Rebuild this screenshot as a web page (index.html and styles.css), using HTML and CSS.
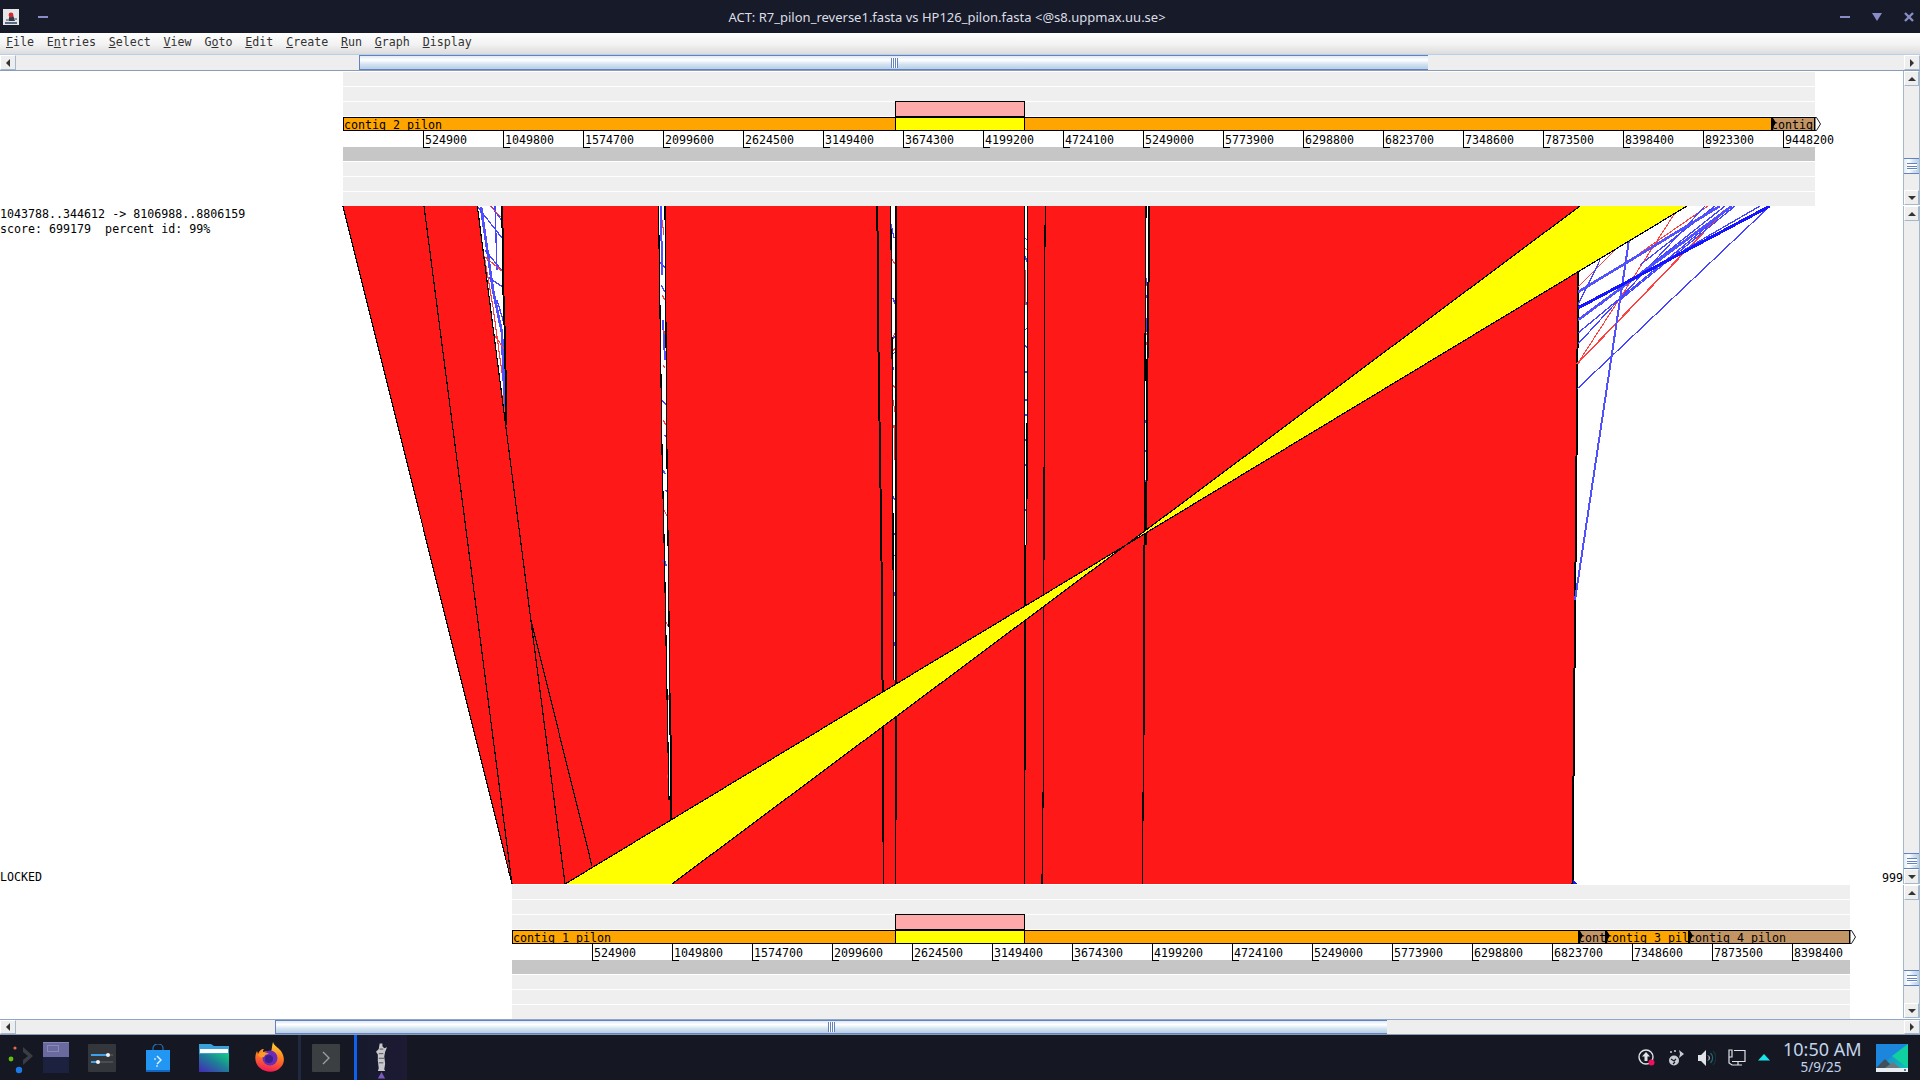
FILE: index.html
```html
<!DOCTYPE html>
<html lang="en">
<head>
<meta charset="utf-8">
<title>ACT</title>
<link rel="stylesheet" href="styles.css">
</head>
<body>
<div class="window">
  <header class="titlebar">
    <div class="title-left">
      <svg class="java-icon" viewBox="0 0 16 16"><rect width="16" height="16" fill="#e4e6ea"/><path d="M2 13h12v2H2z" fill="#5a6a80"/><path d="M5 12l2-6h3l2 6z" fill="#333a48"/><circle cx="8" cy="6" r="2.4" fill="#d8262a"/><path d="M3 10h3v2H3zM11 9h3v2h-3z" fill="#8c96a6"/></svg>
      <span class="wm-dash wm-dash-left"></span>
    </div>
    <div class="title-text">ACT: R7_pilon_reverse1.fasta vs HP126_pilon.fasta &lt;@s8.uppmax.uu.se&gt;</div>
    <div class="title-right">
      <span class="wm-dash"></span>
      <svg class="wm-down" viewBox="0 0 10 8"><path d="M0 0h10L5 8z"/></svg>
      <svg class="wm-close" viewBox="0 0 10 10"><path d="M1 1l8 8M9 1L1 9"/></svg>
    </div>
  </header>

  <nav class="menubar">
    <span><u>F</u>ile</span><span>E<u>n</u>tries</span><span><u>S</u>elect</span><span><u>V</u>iew</span><span>G<u>o</u>to</span><span><u>E</u>dit</span><span><u>C</u>reate</span><span><u>R</u>un</span><span><u>G</u>raph</span><span><u>D</u>isplay</span>
  </nav>

  <div class="hbar hbar-top">
    <span class="btn btn-h"><i class="tri tri-l"></i></span>
    <span class="h-before"></span>
    <span class="thumb-h"><i class="grip-h"></i></span>
    <span class="h-after"></span>
    <span class="btn btn-h"><i class="tri tri-r"></i></span>
  </div>

  <section class="panel panel-top">
    <div class="feature">
      <div class="track track-a">
        <div class="strip"></div><div class="strip"></div><div class="strip"></div>
        <div class="seqbar">
          <div class="seg orange w-a1">contig 2 pilon</div>
          <div class="seg tan marked w-a2">contig</div>
          <svg class="endarrow" viewBox="0 0 6 14"><path d="M0 0.5h1.5L5.5 7l-4 6.5H0z"/></svg>
        </div>
        <div class="ticks">
          <span class="tick">524900</span><span class="tick">1049800</span><span class="tick">1574700</span><span class="tick">2099600</span><span class="tick">2624500</span><span class="tick">3149400</span><span class="tick">3674300</span><span class="tick">4199200</span><span class="tick">4724100</span><span class="tick">5249000</span><span class="tick">5773900</span><span class="tick">6298800</span><span class="tick">6823700</span><span class="tick">7348600</span><span class="tick">7873500</span><span class="tick">8398400</span><span class="tick">8923300</span><span class="tick">9448200</span>
        </div>
        <div class="strip grey"></div><div class="strip"></div><div class="strip"></div><div class="strip last"></div>
        <div class="sel sel-pink sel-a"></div>
        <div class="sel sel-yellow sel-a"></div>
      </div>
    </div>
    <div class="vbar">
      <span class="btn btn-v"><i class="tri tri-u"></i></span>
      <span class="v-before vb-a"></span>
      <span class="thumb-v"><i class="grip-v"></i></span>
      <span class="v-after"></span>
      <span class="btn btn-v"><i class="tri tri-d"></i></span>
    </div>
  </section>

  <section class="panel panel-mid">
    <div class="canvas">
      <svg class="ribbons" width="1903" height="678" viewBox="0 206 1903 678">
        <polygon class="red" points="343,206 1580,206 1578.5,272 1572.5,884 512,884"/>

        <polygon class="white" points="477.3,206 502.3,206 503,280 505,340 506,425 505,423 493.3,333 483.3,250"/>
        <polygon class="white" points="658.5,206 665,206 667,460 668.3,560 671,800 669,800 664.5,560 662,450"/>
        <polygon class="white" points="890.7,206 895.7,206 895.7,680 893.5,680 892.5,400"/>
        <polygon class="white" points="1025,206 1027.5,206 1026.5,545 1025,545"/>
        <polygon class="white" points="1146.5,206 1149.5,206 1146,545 1144.5,545"/>

        <g class="fine">
          <path class="bm" d="M481,207L493,290L502,333L505,413"/>
          <path class="bl" d="M477,206L502,238M495,206L497,270M485,250L503,272M488,277L504,288M491,206L503,222M497,300L506,330"/>
          <path class="rl" d="M485,260L493,307L502,373M490,206L502,218M484,256L503,272M495,336L505,350M503,395L505,420"/>
          <path class="bs" d="M661,206L662,275M663,320L665,360M663,470L665,474M664,560L666,566"/>
          <path class="bl" d="M660,262L665,268M661,285L665,292M662,400L666,405M664,435L667,437M665,490L668,492"/>
          <path class="rl" d="M662,220L664,235M662,295L665,300M663,330L666,336M663,365L665,368M663,420L666,425M664,510L667,516M665,620L668,626M667,690L669,700M667,775L669,780"/>
          <path class="bl" d="M891,224L894,238M893,298L895,304M892,340L895,336M892,355L895,352M892,365L894,370M892,495L895,500M892,530L895,535M893,555L895,556M893,590L895,596M893,640L895,646"/>
          <path class="rl" d="M891,258L895,264M893,337L895,333M892,352L895,348M893,385L895,388M893,400L895,412M894,425L895,460"/>
          <path class="bl" d="M1025,238L1027,240M1025,256L1027,262M1025,300L1027,304M1025,330L1027,328M1025,345L1027,348M1025,372L1027,372M1025,400L1027,400M1025,415L1027,415M1025,440L1027,440M1025,465L1027,465M1025,510L1027,510"/>
          <path class="rl" d="M1025,270L1026,305M1025,248L1027,250"/>
          <path class="bl" d="M1146,278L1147,285M1146,295L1148,300M1146,318L1146,332M1145,375L1147,378M1146,400L1148,402M1145,420L1147,425M1145,450L1146,452M1145,480L1146,485M1145,510L1146,515"/>
          <path class="rl" d="M1147,285L1148,300M1146,335L1148,332M1146,345L1148,340M1146,375L1148,372"/>
        </g>

        <path class="bk" d="M343,206L512,884"/>
        <path class="bk" d="M424,206L512,884"/>
        <path class="bk" d="M477.3,206L565,884"/>
        <path class="bk" d="M531,620L592,866"/>
        <path class="bk2" d="M502.3,206L503,280L505,340L506.5,425"/>
        <path class="bk" d="M658.5,206L662,450L664.5,560L669,800"/>
        <path class="bk" d="M665,206L667,460L668.3,560L670,700"/>
        <path class="bk2" d="M670.3,700L671,820"/>
        <path class="bk2" d="M877,206L878,255L878.5,352L880,455L881,520L882,600L882.5,680L883,830"/>
        <path class="bk" d="M883,830L883.5,884"/>
        <path class="bk" d="M890.7,206L892.5,400L893.5,680"/>
        <path class="bk2" d="M895.5,206L895.5,820"/>
        <path class="bk" d="M895.5,820L895.5,884"/>
        <path class="bk" d="M1024.6,206L1024.6,545"/>
        <path class="bk2" d="M1025,545L1025,770"/>
        <path class="bk" d="M1027.7,206L1026.8,545"/>
        <path class="bk" d="M1024.8,770L1024.4,884"/>
        <path class="bk" d="M1045.3,206L1044.5,290L1043.5,760L1042,884"/>
        <path class="bk" d="M1146,206L1145,350L1144.5,545"/>
        <path class="bk2" d="M1149.5,206L1147.5,360L1146,545"/>
        <path class="bk2" d="M1144.5,545L1144,735"/>
        <path class="bk" d="M1143.5,735L1142.5,884"/>
        <path class="bk2" d="M1578.5,272L1577.5,350L1572.5,884"/>

        <g class="fine">
          <path class="rl" d="M1578,287L1615,250M1640,253L1708,206M1578,363L1675,213"/>
          <path class="rm" d="M1577,364L1725,210"/>
          <path class="bl" d="M1578,305L1600,260M1578,333L1727,210M1578,344L1705,206M1577,389L1770,206M1684,250L1760,206M1620,300L1735,206M1640,265L1715,206M1600,305L1725,206"/>
          <path class="bm" d="M1578,292L1720,206"/>
          <path class="bm" d="M1578,320L1732,206"/>
          <path class="bs" d="M1629,240L1575,600"/>
          <path class="bt" d="M1578,308L1770,206"/>
          <path class="bdark" d="M1573,880L1577,884L1573,884z"/>
        </g>

        <polygon class="yellow" points="1580,206 672,884 565,884 1687,206"/>
        <path class="bk" d="M1580,206L672,884"/>
        <path class="bk" d="M1687,206L565,884"/>
      </svg>
      <div class="info">1043788..344612 -&gt; 8106988..8806159<br>score: 699179  percent id: 99%</div>
      <div class="locked">LOCKED</div>
      <div class="cutoff">999</div>
    </div>
    <div class="vbar">
      <span class="btn btn-v"><i class="tri tri-u"></i></span>
      <span class="v-before vb-b"></span>
      <span class="thumb-v"><i class="grip-v"></i></span>
      <span class="btn btn-v"><i class="tri tri-d"></i></span>
    </div>
  </section>

  <section class="panel panel-bot">
    <div class="feature">
      <div class="track track-b">
        <div class="strip"></div><div class="strip"></div><div class="strip"></div>
        <div class="seqbar">
          <div class="seg orange w-b1">contig 1 pilon</div>
          <div class="seg tan marked w-b2">contig 2 pilon</div>
          <div class="seg orange marked w-b3">contig 3 pilon</div>
          <div class="seg tan marked w-b4">contig 4 pilon</div>
          <svg class="endarrow" viewBox="0 0 6 14"><path d="M0 0.5h1.5L5.5 7l-4 6.5H0z"/></svg>
        </div>
        <div class="ticks">
          <span class="tick">524900</span><span class="tick">1049800</span><span class="tick">1574700</span><span class="tick">2099600</span><span class="tick">2624500</span><span class="tick">3149400</span><span class="tick">3674300</span><span class="tick">4199200</span><span class="tick">4724100</span><span class="tick">5249000</span><span class="tick">5773900</span><span class="tick">6298800</span><span class="tick">6823700</span><span class="tick">7348600</span><span class="tick">7873500</span><span class="tick">8398400</span>
        </div>
        <div class="strip grey"></div><div class="strip"></div><div class="strip"></div><div class="strip last"></div>
        <div class="sel sel-pink sel-b"></div>
        <div class="sel sel-yellow sel-b"></div>
      </div>
    </div>
    <div class="vbar">
      <span class="btn btn-v"><i class="tri tri-u"></i></span>
      <span class="v-before vb-c"></span>
      <span class="thumb-v"><i class="grip-v"></i></span>
      <span class="v-after"></span>
      <span class="btn btn-v"><i class="tri tri-d"></i></span>
    </div>
  </section>

  <div class="hbar hbar-bot">
    <span class="btn btn-h"><i class="tri tri-l"></i></span>
    <span class="h-before"></span>
    <span class="thumb-h"><i class="grip-h"></i></span>
    <span class="h-after"></span>
    <span class="btn btn-h"><i class="tri tri-r"></i></span>
  </div>

  <footer class="taskbar">
    <svg class="tb launcher" viewBox="0 0 28 36"><circle cx="7" cy="4" r="1.6" fill="#e8694a"/><circle cx="3" cy="15" r="2.4" fill="#5fc10a"/><circle cx="11" cy="26" r="3.2" fill="#1a7be8"/><path d="M15 3l10 9-10 9-0-5 5-4-5-4z" fill="#3a3d42"/></svg>
    <div class="tb pager"><div class="pager-on"><i></i></div><div class="pager-off"></div></div>
    <svg class="tb settings" viewBox="0 0 28 28"><rect width="28" height="28" rx="1" fill="#33373b"/><path d="M3 10h22v2H3zM3 17h22v2H3z" fill="#4a4e53"/><path d="M3 10h17v2H3zM3 17h7v2H3z" fill="#3da0e8"/><circle cx="20" cy="11" r="2" fill="#f2f2f2"/><circle cx="10" cy="18" r="2" fill="#f2f2f2"/></svg>
    <svg class="tb bag" viewBox="0 0 24 28"><path d="M7 7V4a5 4 0 0 1 10 0v3" fill="none" stroke="#2a6fb0" stroke-width="1.2"/><path d="M0 6h24v22H0z" fill="#2196f3"/><path d="M0 26h24v2H0z" fill="#1565c0"/><path d="M11 12l4 4-4 4" fill="none" stroke="#e8f4ff" stroke-width="1.4"/><circle cx="9" cy="15" r="1" fill="#bde0ff"/><circle cx="11" cy="22" r="1" fill="#bde0ff"/></svg>
    <svg class="tb folder" viewBox="0 0 30 28"><defs><linearGradient id="fg" x1="0" y1="1" x2="1" y2="0"><stop offset="0" stop-color="#4527b8"/><stop offset="0.55" stop-color="#1f7f98"/><stop offset="1" stop-color="#10d080"/></linearGradient></defs><path d="M0 0h12l3 2h15v26H0z" fill="#3aa0d8"/><path d="M1 5h28v4H1z" fill="#fff"/><path d="M0 10h30v18H0z" fill="url(#fg)"/></svg>
    <svg class="tb firefox" viewBox="0 0 30 30"><defs><linearGradient id="ff" x1="0.6" y1="0" x2="0.4" y2="1"><stop offset="0" stop-color="#ffd23a"/><stop offset="0.5" stop-color="#ff7a1f"/><stop offset="1" stop-color="#f0185a"/></linearGradient></defs><path d="M18 0c1 4 5 5 8 9 4 6 4 13-1 17-5 5-14 5-20 0C0 22-1 15 2 9l1 3c1-3 3-5 6-5-1 1-1 2-1 3 3-1 6-1 8 0 1-3 1-7 2-10z" fill="url(#ff)"/><circle cx="15" cy="16" r="7.5" fill="#6a2bb8"/><circle cx="14" cy="17" r="4" fill="#3c1f8c"/><path d="M3 13c3-4 8-3 11-1-3 0-4 1-5 3-3 1-5 0-6-2z" fill="#ff9a2a"/></svg>
    <span class="tb-sep"></span>
    <svg class="tb term" viewBox="0 0 28 28"><rect width="28" height="28" rx="1" fill="#3c3f41"/><path d="M11 8l6 6-6 6" fill="none" stroke="#9a9da0" stroke-width="1.4"/></svg>
    <div class="active-task">
      <svg class="statue" viewBox="0 0 12 38"><path d="M4 0h3v3l2 2 3-1-2 5-1 5 1 8-1 6 1 2H2l1-3-1-8 0-7-2-3 3-3z" fill="#c8c8cc"/><path d="M4 6h4M3 11h5M3 16h6M3 21h5" stroke="#4a4a50" stroke-width="1"/><path d="M6 31l4 7H2z" fill="#7a5ab8"/></svg>
    </div>
    <div class="tray">
      <svg class="ti upd" viewBox="0 0 18 18"><circle cx="8" cy="8" r="7" fill="none" stroke="#dfe2e6" stroke-width="1.4"/><path d="M8 3l4 4.5H9.5V12h-3V7.5H4z" fill="#dfe2e6"/><circle cx="13.5" cy="13.5" r="3" fill="#f0105f"/></svg>
      <svg class="ti net" viewBox="0 0 18 18"><circle cx="6" cy="11.5" r="5" fill="#c8ccd2"/><path d="M3 10l3 2 2-2M5 15l2-2" stroke="#151823" stroke-width="1.2" fill="none"/><circle cx="3" cy="3" r="1" fill="#c8ccd2"/><circle cx="7" cy="2" r="1" fill="#c8ccd2"/><path d="M11 1l5 4-5 4 1-4z" fill="#c8ccd2"/></svg>
      <svg class="ti vol" viewBox="0 0 18 18"><path d="M0 6h3l5-5v16l-5-5H0z" fill="#dfe2e6"/><path d="M10 6.5a3 3 0 0 1 0 5" stroke="#dfe2e6" fill="none"/><path d="M12.5 4a7 7 0 0 1 0 10" stroke="#1f6a70" fill="none" stroke-width="1.2"/><path d="M15 2a10 10 0 0 1 0 14" stroke="#16343c" fill="none" stroke-width="1.2"/></svg>
      <svg class="ti mon" viewBox="0 0 18 18"><path d="M6 1.500h11v11H4M1 1h3v7H1zM1 8v6l3 2h10M10 13v3" fill="none" stroke="#dfe2e6" stroke-width="1.200"/></svg>
      <svg class="ti caret" viewBox="0 0 12 7"><path d="M6 0l6 6.500H0z" fill="#19e4ea"/></svg>
      <div class="clock"><div class="time">10:50 AM</div><div class="date">5/9/25</div></div>
      <svg class="desk" viewBox="0 0 32 28"><defs><linearGradient id="dg" x1="0" y1="0" x2="1" y2="1"><stop offset="0" stop-color="#1a6fe0"/><stop offset="1" stop-color="#12c8b0"/></linearGradient></defs><rect width="32" height="28" fill="url(#dg)"/><path d="M0 28V0l32 0L16 12z" fill="#1c86dc"/><path d="M16 12l16-12v24z" fill="#10d0a0"/><path d="M0 24l9-9 9 9z" fill="#40505a"/><path d="M9 24l8-6 7 6z" fill="#6a7a80"/><rect y="24" width="32" height="4" fill="#e8eef2"/><rect x="28" y="25" width="2" height="2" fill="#5a7890"/></svg>
    </div>
  </footer>
</div>
</body>
</html>
```

FILE: styles.css
```css
* { box-sizing: border-box; }
html, body { margin: 0; padding: 0; width: 1920px; height: 1080px; overflow: hidden; background: #fff; }
.window { display: flex; flex-direction: column; width: 1920px; height: 1080px; font-family: "DejaVu Sans Mono", "Liberation Mono", monospace; font-size: 11.65px; color: #000; }

/* title bar */
.titlebar { height: 33px; flex: none; background: #171a28; display: grid; grid-template-columns: 1fr auto 1fr; align-items: center; padding-right: 26px; }
.title-left { display: flex; align-items: center; padding-left: 3px; }
.java-icon { width: 16px; height: 16px; }
.wm-dash { display: block; width: 10px; height: 2px; background: #8a8cc8; }
.wm-dash-left { margin-left: 19px; }
.title-text { font-family: "Noto Sans", sans-serif; font-size: 13px; color: #dcdee6; white-space: nowrap; }
.title-right { display: flex; align-items: center; justify-content: flex-end; margin-right: -20px; gap: 22px; }
.wm-down { width: 10px; height: 8px; fill: #8a8cc8; }
.wm-close { width: 10px; height: 10px; fill: none; stroke: #8a8cc8; stroke-width: 2.400; }

/* menu */
.menubar { height: 21px; flex: none; display: flex; align-items: flex-start; gap: 12.8px; padding: 2px 0 0 6px; line-height: 15px; background: linear-gradient(#ffffff, #f2f2f2 55%, #dcdcdc); color: #333; white-space: nowrap; }
.menubar u { text-underline-offset: 1px; }

/* horizontal scrollbar */
.hbar { flex: none; display: flex; background: #eee; border-top: 1px solid #b8cfe5; border-bottom: 1px solid #8a9db5; }
.hbar-top { height: 17px; }
.hbar-bot { height: 16px; border-top-color: #8fa6c4; }
.btn { flex: none; display: flex; align-items: center; justify-content: center; background: #eee; border: 1px solid #a3b8cc; border-left-color: #fff; border-top-color: #fff; }
.btn-h { width: 16px; }
.btn-v { height: 15px; }
.tri { display: block; width: 0; height: 0; border-style: solid; border-color: transparent; }
.tri-l { border-width: 4px 4px 4px 0; border-right-color: #333; }
.tri-r { border-width: 4px 0 4px 4px; border-left-color: #333; }
.tri-u { border-width: 0 4px 4px; border-bottom-color: #333; }
.tri-d { border-width: 4px 4px 0; border-top-color: #333; }
.hbar-top .h-before { flex: none; width: 343px; }
.hbar-top .thumb-h { width: 1069px; }
.hbar-bot .h-before { flex: none; width: 259px; }
.hbar-bot .thumb-h { width: 1112px; }
.h-after { flex: 1; }
.thumb-h { flex: none; display: flex; align-items: center; justify-content: center; border: 1px solid #6382bf; border-width: 1px 0 1px 1px; background: linear-gradient(#dfe9f4, #fff 30%, #d2e2f1 65%, #b8cfe5); }
.grip-h { display: block; width: 7px; height: 10px; background: repeating-linear-gradient(90deg, #6382bf 0 1px, #fff 1px 2px); }

/* panels */
.panel { flex: none; display: flex; background: #fff; }
.panel-top { height: 135px; }
.panel-mid { height: 679px; }
.panel-bot { height: 134px; }
.feature { flex: 1; min-width: 0; }
.panel-top .feature { padding: 1px 0 0 343px; }
.panel-bot .feature { padding-left: 512px; }
.track { position: relative; }
.track-a { width: 1472px; }
.track-b { width: 1338px; }
.strip { height: 14px; margin-bottom: 1px; background: #efefef; }
.strip.grey { background: #c6c6c6; }
.strip.last { margin-bottom: 0; }

.seqbar { display: flex; height: 14px; width: 100%; white-space: nowrap; }
.seg { flex: none; position: relative; height: 14px; border-top: 1px solid #000; border-bottom: 1px solid #000; overflow: hidden; line-height: 15px; color: #000; }
.seg.orange { background: #ffa500; border-left: 1px solid #000; }
.seg.tan { background: #c49564; }
.seg.marked { border-left: 0; }
.seg.marked::before { content: ""; position: absolute; left: 0; top: 0; width: 5px; height: 12px; background: #000; clip-path: polygon(0 0, 40% 0, 100% 40%, 45% 75%, 45% 100%, 0 100%); }
.w-a1 { width: 1428px; }
.w-a2 { width: 44px; border-right: 1px solid #000; }
.w-b1 { width: 1066px; }
.w-b2 { width: 27px; }
.w-b3 { width: 83px; }
.w-b4 { width: 162px; border-right: 1px solid #000; }
.endarrow { flex: none; width: 6px; height: 14px; fill: #fff; stroke: #000; stroke-width: 0.9; }

.ticks { display: flex; height: 16px; padding-left: 80px; white-space: nowrap; }
.tick { flex: none; width: 80px; position: relative; padding-left: 2px; line-height: 18px; color: #000; }
.tick::before { content: ""; position: absolute; left: 0; top: 0; width: 6px; height: 16px; border-left: 1px solid #000; border-bottom: 1px solid #000; }

.sel { position: absolute; width: 130px; border: 1px solid #000; }
.sel-a { left: 552px; }
.sel-b { left: 383px; }
.sel-pink { top: 29px; height: 16px; background: #ffaaaa; }
.sel-yellow { top: 45px; height: 14px; background: #ffff00; }

/* comparison canvas */
.canvas { position: relative; flex: 1; min-width: 0; overflow: hidden; }
.ribbons { display: block; shape-rendering: crispEdges; }
.red { fill: #ff1818; }
.white { fill: #fff; }
.yellow { fill: #ffff00; }
.ribbons path { fill: none; }
.bk { stroke: #000; stroke-width: 1.2; }
.bk2 { stroke: #000; stroke-width: 2; }
.bl { stroke: #4545ff; stroke-width: 1.3; }
.bs { stroke: #5050ff; stroke-width: 2; }
.bm { stroke: #5050ff; stroke-width: 2.6; }
.bt { stroke: #1414ff; stroke-width: 3; }
.rl { stroke: #ff4040; stroke-width: 1.1; }
.rm { stroke: #ff4040; stroke-width: 1.6; }
.ribbons .bdark { fill: #1414ff; }
.info { position: absolute; left: 0; top: 1px; line-height: 15px; white-space: pre; }
.locked { position: absolute; left: 0; bottom: 1px; line-height: 14px; }
.cutoff { position: absolute; right: 0; bottom: 0; line-height: 14px; }

/* vertical scrollbar */
.vbar { flex: none; width: 17px; display: flex; flex-direction: column; background: #eee; border-left: 1px solid #a3b8cc; border-right: 1px solid #a3b8cc; margin-bottom: 1px; }
.v-before { flex: none; }
.vb-a { height: 72px; }
.vb-b { flex: 1; }
.vb-c { height: 70px; }
.v-after { flex: 1; }
.thumb-v { flex: none; height: 16px; display: flex; align-items: center; justify-content: center; border: 1px solid #6382bf; border-width: 1px 0; background: linear-gradient(90deg, #dfe9f4, #fff 30%, #d2e2f1 65%, #b8cfe5); }
.grip-v { display: block; width: 10px; height: 7px; background: repeating-linear-gradient(#6382bf 0 1px, #fff 1px 2.5px); }

/* task bar */
.taskbar { flex: none; height: 45px; background: #151823; display: flex; align-items: flex-start; }
.tb { flex: none; display: block; }
.launcher { width: 28px; height: 36px; margin: 9px 0 0 8px; }
.pager { width: 26px; height: 31px; margin: 7px 0 0 7px; display: flex; flex-direction: column; }
.pager-on { height: 15px; background: #6b6a9e; border-top: 1px solid #8585b8; padding: 2px 4px; }
.pager-on i { display: block; width: 12px; height: 7px; border: 1px solid #8a88b8; }
.pager-off { flex: 1; background: #1d2140; }
.settings { width: 28px; height: 28px; margin: 9px 0 0 19px; }
.bag { width: 24px; height: 28px; margin: 9px 0 0 30px; }
.folder { width: 30px; height: 28px; margin: 9px 0 0 29px; }
.firefox { width: 30px; height: 30px; margin: 7px 0 0 26px; }
.tb-sep { flex: none; width: 3px; height: 45px; margin-left: 13px; background: #22283f; }
.term { width: 28px; height: 28px; margin: 9px 0 0 11px; }
.active-task { flex: none; width: 53px; height: 45px; margin-left: 14px; border-left: 3px solid #1060f0; background: linear-gradient(90deg, #161a2c, #1d1a34); display: flex; justify-content: center; }
.statue { width: 11px; height: 38px; margin-top: 7px; margin-right: 2px; }
.tray { margin-left: auto; display: flex; align-items: center; height: 45px; }
.ti { flex: none; display: block; }
.upd { width: 18px; height: 18px; }
.net { width: 18px; height: 18px; margin-left: 12px; }
.vol { width: 18px; height: 18px; margin-left: 12px; }
.mon { width: 18px; height: 18px; margin-left: 12px; }
.caret { width: 12px; height: 7px; margin-left: 12px; }
.clock { flex: none; width: 76px; margin: 0 1px 2px 13px; text-align: center; font-family: "Noto Sans", sans-serif; color: #c3d3ea; white-space: nowrap; }
.time { font-size: 18px; line-height: 20px; }
.date { font-size: 13.500px; line-height: 16px; }
.desk { flex: none; width: 32px; height: 28px; margin: 0 12px 0 16px; }
```
